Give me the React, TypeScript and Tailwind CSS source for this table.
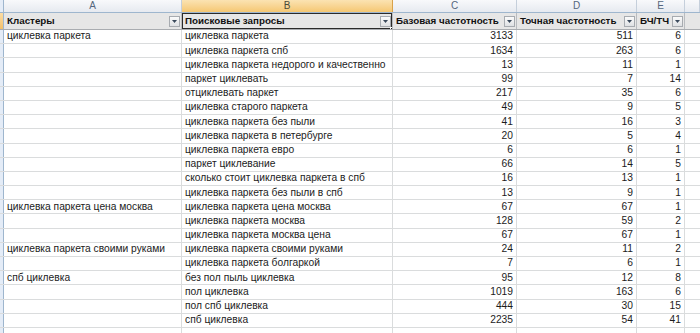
import React from "react";

type Row = [string, string, number, number, number];

const rows: Row[] = [
  ["циклевка паркета", "циклевка паркета", 3133, 511, 6],
  ["", "циклевка паркета спб", 1634, 263, 6],
  ["", "циклевка паркета недорого и качественно", 13, 11, 1],
  ["", "паркет циклевать", 99, 7, 14],
  ["", "отциклевать паркет", 217, 35, 6],
  ["", "циклевка старого паркета", 49, 9, 5],
  ["", "циклевка паркета без пыли", 41, 16, 3],
  ["", "циклевка паркета в петербурге", 20, 5, 4],
  ["", "циклевка паркета евро", 6, 6, 1],
  ["", "паркет циклевание", 66, 14, 5],
  ["", "сколько стоит циклевка паркета в спб", 16, 13, 1],
  ["", "циклевка паркета без пыли в спб", 13, 9, 1],
  ["циклевка паркета цена москва", "циклевка паркета цена москва", 67, 67, 1],
  ["", "циклевка паркета москва", 128, 59, 2],
  ["", "циклевка паркета москва цена", 67, 67, 1],
  ["циклевка паркета своими руками", "циклевка паркета своими руками", 24, 11, 2],
  ["", "циклевка паркета болгаркой", 7, 6, 1],
  ["спб циклевка", "без пол пыль циклевка", 95, 12, 8],
  ["", "пол циклевка", 1019, 163, 6],
  ["", "пол спб циклевка", 444, 30, 15],
  ["", "спб циклевка", 2235, 54, 41],
];

const grid = "grid grid-cols-[4px_178px_211px_124px_120px_48px_1fr]";

function FilterButton() {
  return (
    <div className="absolute right-[1px] top-[3px] w-[11px] h-[11px] border border-[#a7abb0] bg-gradient-to-b from-[#fbfbfb] to-[#dfe1e4] flex items-center justify-center">
      <svg width="5" height="3" viewBox="0 0 5 3">
        <path d="M0 0 L5 0 L2.5 3 Z" fill="#3b4a5c" />
      </svg>
    </div>
  );
}

function HeaderCell({ label, active }: { label: string; active?: boolean }) {
  return (
    <div className="relative h-full border-r border-[#b9bcc0] pl-[3px] flex items-center font-bold text-[9.8px] text-[#111] overflow-hidden whitespace-nowrap">
      {label}
      <FilterButton />
      {active && (
        <>
          <div className="absolute inset-0 border-[1.5px] border-[#2a2a2a] pointer-events-none" />
          <div className="absolute right-[-2px] bottom-[-2px] w-[4px] h-[4px] bg-[#1f1f1f] border border-white" />
        </>
      )}
    </div>
  );
}

export default function App() {
  return (
    <div
      className="w-[700px] h-[333px] overflow-hidden bg-white text-[10.25px] leading-none text-[#1c1c1c]"
      style={{ fontFamily: '"Liberation Sans", Arial, sans-serif' }}
    >
      {/* column letters */}
      <div className={`${grid} h-[13px] border-b border-[#9eb6ce] text-[10px] text-[#55677d]`}>
        <div className="bg-[#e4ecf7] border-r border-[#9eb6ce]" />
        {["A", "B", "C", "D", "E", ""].map((l) => (
          <div
            key={l || "F"}
            className={
              l === "B"
                ? "flex items-center justify-center border-r border-[#d9a24a] bg-gradient-to-b from-[#fbe3b2] to-[#f5c772] text-[#4a4a3a]"
                : "flex items-center justify-center border-r border-[#c5cfdb] bg-gradient-to-b from-[#f8f9fb] to-[#e6eaf0]"
            }
          >
            {l}
          </div>
        ))}
      </div>

      {/* header row */}
      <div className={`${grid} h-[17px] border-b border-[#a9acb0] bg-[#e6e6e6]`}>
        <div className="bg-gradient-to-b from-[#fbdca3] to-[#f3c06a] border-r border-[#9eb6ce]" />
        <HeaderCell label="Кластеры" />
        <HeaderCell label="Поисковые запросы" active />
        <HeaderCell label="Базовая частотность" />
        <HeaderCell label="Точная частотность" />
        <HeaderCell label="БЧ/ТЧ" />
        <div />
      </div>

      {/* data rows */}
      {rows.map(([cluster, query, base, exact, ratio], i) => (
        <div key={i} className={`${grid} h-[14.2px] border-b border-[#dadcdd]`}>
          <div className="bg-[#e4ecf7] border-r border-[#9eb6ce]" />
          <div className="border-r border-[#dadcdd] pl-[3px] flex items-center whitespace-nowrap overflow-hidden">
            {cluster}
          </div>
          <div className="border-r border-[#dadcdd] pl-[3px] flex items-center whitespace-nowrap overflow-hidden">
            {query}
          </div>
          <div className="border-r border-[#dadcdd] pr-[3px] flex items-center justify-end">{base}</div>
          <div className="border-r border-[#dadcdd] pr-[3px] flex items-center justify-end">{exact}</div>
          <div className="border-r border-[#dadcdd] pr-[3px] flex items-center justify-end">{ratio}</div>
          <div />
        </div>
      ))}
      <div className={`${grid} h-[14px]`}>
        <div className="bg-[#e4ecf7] border-r border-[#9eb6ce]" />
        <div className="border-r border-[#dadcdd]" />
        <div className="border-r border-[#dadcdd]" />
        <div className="border-r border-[#dadcdd]" />
        <div className="border-r border-[#dadcdd]" />
        <div className="border-r border-[#dadcdd]" />
        <div />
      </div>
    </div>
  );
}
